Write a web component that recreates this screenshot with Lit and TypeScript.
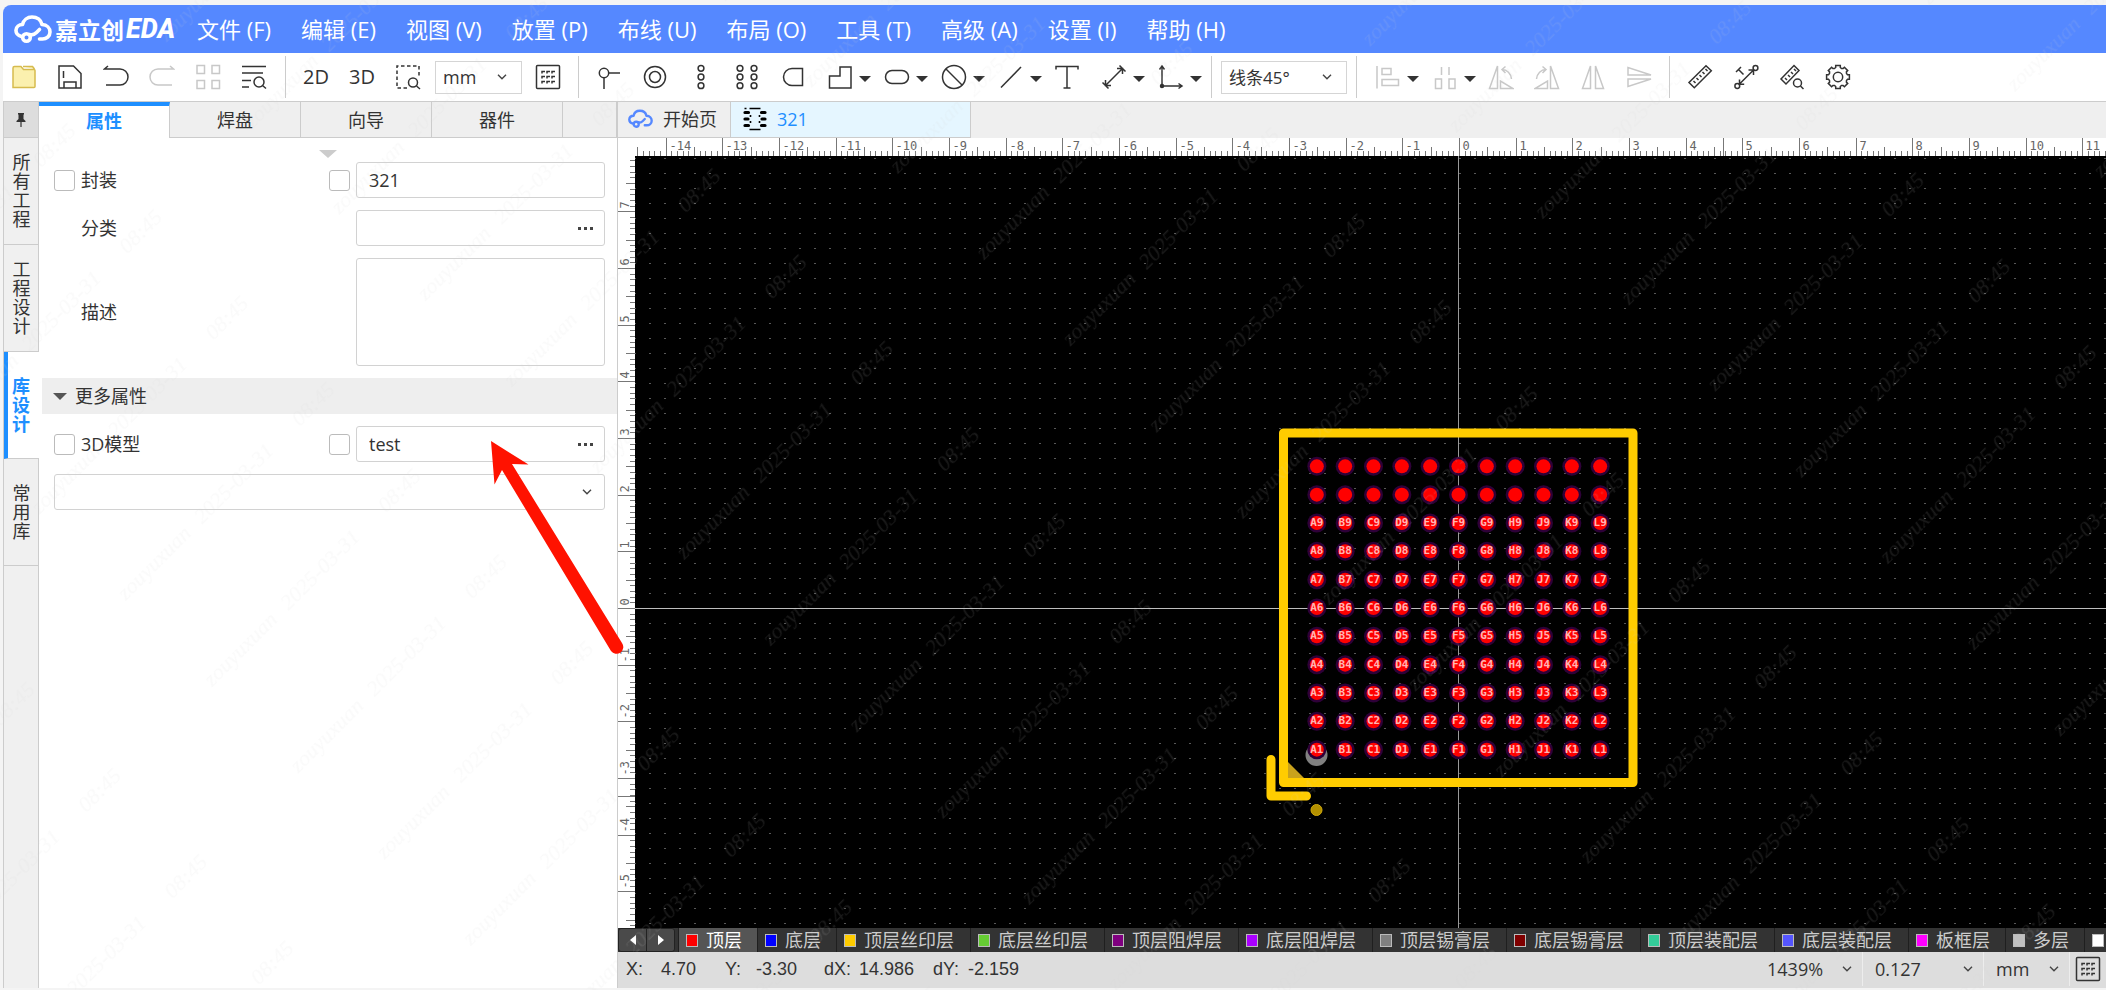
import { LitElement, html, svg, css } from "lit";
import { customElement, property, state } from "lit/decorators.js";
import { classMap } from "lit/directives/class-map.js";
import { styleMap } from "lit/directives/style-map.js";

const UNIT = 170 / 3;
const PITCH = UNIT / 2;
const ORIGIN_X = 824;
const ORIGIN_Y = 452;

const gearPath = (() => {
  const pts: string[] = [];
  for (let k = 0; k < 8; k++) {
    const a = (k * Math.PI) / 4 - Math.PI / 2;
    for (const [off, r] of [[-0.39, 9.2], [-0.24, 9.8], [-0.2, 11.6], [0.2, 11.6], [0.24, 9.8]]) {
      pts.push(`${(13 + r * Math.cos(a + off)).toFixed(1)} ${(13 + r * Math.sin(a + off)).toFixed(1)}`);
    }
  }
  return `M${pts.join("L")}Z`;
})();

const gridDots = [7, 12, 17].flatMap((y) => [7, 12, 17].map((x) => svg`<path d="M${x} ${y + 2.5}v-2h3" />`));

const icons: Record<string, unknown> = {
  folder: svg`<path fill="#fbf0ae" stroke="#d6bb4e" d="M2 23.500V4q0-1.500 1.500-1.500H10l2.500 3H23q1 0 1 1v16q0 1-1 1z M12 2.500h9.500l2 2.500" />`,
  save: svg`<path d="M2 2h14.500L24 9.500V24H2zM6.500 7v7M7 24v-6h12v6" />`,
  undo: svg`<path d="M5 2L1.500 5H17a7.700 7.700 0 0 1 0 16H3" />`,
  redo: svg`<path d="M21 2l3.500 3H9a7.700 7.700 0 0 0 0 16h14" />`,
  tiles: svg`<path d="M2 1.500h7.500v8H2zM17 1.500h7.500v8H17zM2 16.500h7.500v8H2zM17 16.500h7.500v8H17z" />`,
  find: svg`<path d="M1 2.500h24M1 9h21M1 16.500h9M1 23h7M21.500 21.500l3.500 3" /><circle cx="18" cy="18" r="5" />`,
  area: svg`<path stroke-dasharray="3.500 2.500" d="M12 24H2V2h22v10" /><circle cx="18" cy="18.500" r="4.500" /><path d="M21.500 22l3.500 3" />`,
  gridbox: svg`<rect x="1.500" y="1.500" width="23" height="23" rx="1" />${gridDots}`,
  via: svg`<circle cx="8" cy="9" r="4.700" /><path d="M12.700 9H24M8 13.700V25" />`,
  target: svg`<circle cx="13" cy="13" r="10.500" /><circle cx="13" cy="13" r="5.500" />`,
  dots3: svg`<circle cx="13" cy="4.300" r="2.900" /><circle cx="13" cy="13" r="2.900" /><circle cx="13" cy="21.700" r="2.900" />`,
  dots6: [6, 20].map((x) => [4.3, 13, 21.7].map((y) => svg`<circle cx=${x} cy=${y} r="2.900" />`)),
  dpad: svg`<path d="M22.500 4.500v17H12a8.500 8.500 0 0 1 0-17z" />`,
  poly: svg`<path d="M13 3h11v21H2.500V12H13z" />`,
  oval: svg`<rect x="1.500" y="6.500" width="23" height="13" rx="6.500" />`,
  forbid: svg`<circle cx="13" cy="13" r="11.500" /><path d="M5 5l16 16" />`,
  line: svg`<path d="M3 23.500L23 3" />`,
  letter: svg`<path d="M2 5.500v-3h22v3M13 2.500V24M9.500 24h7" />`,
  dim: svg`<path d="M4.500 21.500l17-17M4.500 16v5.500H10M16 4.500h5.500V10M1.500 18.500l6 6M18.500 1.500l6 6" />`,
  axes: svg`<path d="M4 2v20h20M1.500 5.500L4 2l2.500 3.500M20.500 19.500L24 22l-3.500 2.500" /><circle cx="4" cy="22" r="1.500" fill="currentColor" />`,
  align: svg`<path d="M2 2v22.500M7 4.500h9v6H7zM7 15.500h16.500v6H7z" />`,
  distribute: svg`<path d="M9.500 3v8M17 3v8M3.500 15h6v9.500h-6zM17 15h6v9.500h-6z" />`,
  rotleft: svg`<path d="M1.500 24.500L9.500 2v22.500zM12.500 17v7.500H25zM17.500 2.500L14 5.500l3.500 3.500M14 5.500c5 0 9 4 9.500 9.500" />`,
  rotright: svg`<path d="M24.500 24.500L16.500 2v22.500zM13.500 17v7.500H1zM8.500 2.500L12 5.500 8.500 9M12 5.500c-5 0-9 4-9.500 9.500" />`,
  mirror: svg`<path d="M2.500 24.500L10.500 2v22.500zM15.500 2l8 22.500h-8z" />`,
  flip: svg`<path d="M2 3.500V11h23zM2 22.500V15h23z" />`,
  ruler: svg`<path d="M19 1.700l5.300 5L7.300 23.700 2 18.500zM6.500 17l2 2M9.500 14l2 2M12.500 11l2 2M15.500 8l2 2M18.500 5l2 2" />`,
  measure: svg`<circle cx="4.300" cy="22" r="2.400" /><circle cx="22.500" cy="4" r="2.400" /><path d="M6 20.500L20.800 5.800M6.500 15.500v4.700h4.700M15.500 6h5v5M3 8l5-5M5.500 5.500l5 5" />`,
  rulerfind: svg`<path d="M15 1.500l5 5L7 20l-5-5zM6 14l2 2M9 11l2 2M12 8l2 2M15 5l2 2" /><circle cx="18.500" cy="19" r="4" /><path d="M21.500 22l3 3" />`,
  gear: svg`<path d="${gearPath}" /><circle cx="13" cy="13" r="4.700" />`,
};

@customElement("tool-icon")
export class ToolIcon extends LitElement {
  @property() name = "";
  static styles = css`
    :host { display: block; width: 26px; height: 26px; }
    .glyph { display: block; width: 26px; height: 26px; fill: none; stroke: currentColor; stroke-width: 1.5; }
  `;
  render() {
    return html`<svg class="glyph" viewBox="0 0 26 26" aria-hidden="true">${icons[this.name]}</svg>`;
  }
}

@customElement("cloud-mark")
export class CloudMark extends LitElement {
  static styles = css`
    :host { display: block; }
    .mark { display: block; width: 100%; height: 100%; fill: none; stroke: currentColor; stroke-width: 3.6; stroke-linecap: round; stroke-linejoin: round; }
  `;
  render() {
    return html`<svg class="mark" viewBox="0 0 38 29" aria-hidden="true">
      <path d="M7.500 21.500C3.500 20.500 1.800 18 2 15c.2-3.300 3-5.500 6.500-5.500C9.500 5 13.500 2 18 2c5 0 9 3 10 7.500 5 .3 8 3.700 8 7.500 0 4.300-3.500 7-7.500 7h-3" />
      <circle cx="12.500" cy="22.500" r="3.800" />
      <path d="M15.500 19.500c3 1 5 0 7-2l3-3" />
    </svg>`;
  }
}

interface Tool { icon?: string; text?: string; label: string; drop?: boolean; off?: boolean; }

@customElement("tool-group")
export class ToolGroup extends LitElement {
  @property({ attribute: false }) tools: Tool[] = [];
  static styles = css`
    :host { display: flex; align-items: center; }
    .tool {
      display: flex; align-items: center; justify-content: center;
      width: 46px; height: 40px; padding: 0; border: 0; background: none; color: #333;
      font: 400 20px/40px "Open Sans", sans-serif;
    }
    .drop { width: 57px; justify-content: flex-start; padding-left: 11px; gap: 6px; }
    .off { color: #c8c8c8; }
    .caret { width: 12px; height: 6px; fill: #333; margin-top: 4px; }
  `;
  render() {
    return this.tools.map((t) => html`
      <button type="button" aria-label=${t.label} class=${classMap({ tool: true, drop: !!t.drop, off: !!t.off })}>
        ${t.text ? t.text : html`<tool-icon name=${t.icon}></tool-icon>`}
        ${t.drop ? html`<svg class="caret" viewBox="0 0 12 6" aria-hidden="true"><path d="M0 0h12L6 6z" /></svg>` : ""}
      </button>`);
  }
}

@customElement("pick-box")
export class PickBox extends LitElement {
  @property() value = "";
  @property() label = "";
  static styles = css`
    :host { display: block; position: relative; box-sizing: border-box; }
    .pick {
      appearance: none; display: block; width: 100%; height: 100%; margin: 0;
      padding: 0 0 0 var(--pick-pad, 7px); border: 0; background: transparent; color: #333;
      font: var(--pick-size, 18px) "Open Sans", "Noto Sans CJK SC", sans-serif;
    }
    .chev { position: absolute; right: var(--pick-right, 14px); top: 50%; width: 10px; height: 6px; margin-top: -3px; fill: none; stroke: #444; stroke-width: 1.4; pointer-events: none; }
  `;
  render() {
    return html`<select class="pick" aria-label=${this.label}><option>${this.value}</option></select>
      <svg class="chev" viewBox="0 0 10 6" aria-hidden="true"><path d="M1 .700l4 4 4-4" /></svg>`;
  }
}

@customElement("footprint-canvas")
export class FootprintCanvas extends LitElement {
  @state() private spanX = 0;
  @state() private spanY = 0;
  private observer = new ResizeObserver(() => this.measure());

  static styles = css`
    :host { display: grid; grid-template-columns: 17px minmax(0, 1fr); grid-template-rows: 18px minmax(0, 1fr); background: #fff; min-height: 0; overflow: hidden; }
    .layer { display: block; width: 100%; height: 100%; overflow: hidden; min-height: 0; }
    .tick { stroke: #777; stroke-width: 1; }
    .num { font: 12px "DejaVu Sans Mono", monospace; fill: #666; }
    .board { background: #000; }
    .pin { font: bold 11px "DejaVu Sans Mono", monospace; fill: #ffb4b4; text-anchor: middle; }
    .halo { fill: #2e0038; }
    .pad { fill: #ff0000; }
    .silk { fill: none; stroke: #ffcc00; stroke-width: 9; stroke-linecap: round; stroke-linejoin: round; }
  `;

  connectedCallback() {
    super.connectedCallback();
    this.observer.observe(this);
    this.measure();
  }

  disconnectedCallback() {
    super.disconnectedCallback();
    this.observer.disconnect();
  }

  private measure() {
    this.spanX = Math.max(0, this.clientWidth - 17);
    this.spanY = Math.max(0, this.clientHeight - 18);
  }

  private ticks(span: number, vertical: boolean) {
    const out = [];
    const depth = vertical ? 17 : 18;
    const base = vertical ? ORIGIN_Y : ORIGIN_X;
    const from = Math.ceil((-base * 10) / UNIT);
    const to = Math.floor(((span - base) * 10) / UNIT);
    for (let i = from; i <= to; i++) {
      const at = Math.round(base + (i * UNIT) / 10) + 0.5;
      const len = i % 10 === 0 ? depth : i % 5 === 0 ? 9 : 5;
      out.push(vertical
        ? svg`<line class="tick" x1=${depth - len} x2=${depth} y1=${at} y2=${at} />`
        : svg`<line class="tick" y1=${depth - len} y2=${depth} x1=${at} x2=${at} />`);
      if (i % 10 !== 0) continue;
      const n = vertical ? -i / 10 : i / 10;
      const room = 3 + String(n).length * 7.3;
      if (vertical && at > room) {
        out.push(svg`<text class="num" transform="translate(11 ${at - 3}) rotate(-90)">${String(n || 0)}</text>`);
      } else if (!vertical && at + room < span) {
        out.push(svg`<text class="num" x=${at + 3} y="12">${String(n)}</text>`);
      }
    }
    return out;
  }

  render() {
    const cols = ["A", "B", "C", "D", "E", "F", "G", "H", "J", "K", "L"];
    const pads = cols.flatMap((c, ci) =>
      cols.map((_, ri) => {
        const x = (ci - 5) * PITCH;
        const y = (5 - ri) * PITCH;
        return svg`<circle class="halo" cx=${x} cy=${y} r="9.500" /><circle class="pad" cx=${x} cy=${y} r="7" />
          ${ri < 9 ? svg`<text class="pin" x=${x} y=${y + 3}>${c}${ri + 1}</text>` : ""}`;
      }));
    return html`
      <span></span>
      <svg class="layer" aria-hidden="true">
        ${this.ticks(this.spanX, false)}
        <line class="tick" x1="1088.500" x2="1088.500" y1="0" y2="18" />
      </svg>
      <svg class="layer" aria-hidden="true">
        ${this.ticks(this.spanY, true)}
        <line class="tick" y1="640.500" y2="640.500" x1="0" x2="17" />
      </svg>
      <svg class="layer board" role="img" aria-label="321">
        <defs>
          <pattern id="dots" width="15" height="15" patternUnits="userSpaceOnUse" x="-1" y="2">
            <rect x="0" y="0" width="2" height="1" fill="#585858" />
          </pattern>
        </defs>
        <rect width="100%" height="100%" fill="url(#dots)" />
        <line x1="0" x2="100%" y1="452.500" y2="452.500" stroke="#bdbdbd" />
        <line x1="823.500" x2="823.500" y1="0" y2="100%" stroke="#9a9a9a" />
        <g transform="translate(${ORIGIN_X - 0.5} ${ORIGIN_Y})">
          <circle cx="-142" cy="147" r="11" fill="#808080" />
          ${pads}
          <path d="M-170.500 154L-154 170.500H-170.500z" fill="#c9a21c" />
          <path class="silk" d="M-175-175H174.500V174.500H-175z" />
          <path class="silk" d="M-187.500 151.500V188H-152" />
          <circle cx="-142" cy="202" r="5.500" fill="#b39000" stroke="#d1aa0c" />
        </g>
      </svg>`;
  }
}

const menus = ["文件 (F)", "编辑 (E)", "视图 (V)", "放置 (P)", "布线 (U)", "布局 (O)", "工具 (T)", "高级 (A)", "设置 (I)", "帮助 (H)"];

const fileTools: Tool[] = [
  { icon: "folder", label: "打开" }, { icon: "save", label: "保存" }, { icon: "undo", label: "撤销" },
  { icon: "redo", label: "重做", off: true }, { icon: "tiles", label: "交叉选择", off: true }, { icon: "find", label: "查找" },
];
const viewTools: Tool[] = [{ text: "2D", label: "2D" }, { text: "3D", label: "3D" }, { icon: "area", label: "区域选择" }];
const drawTools: Tool[] = [
  { icon: "via", label: "焊盘" }, { icon: "target", label: "过孔" }, { icon: "dots3", label: "单排焊盘" },
  { icon: "dots6", label: "双排焊盘" }, { icon: "dpad", label: "异形焊盘" }, { icon: "poly", label: "填充区域", drop: true },
  { icon: "oval", label: "挖槽", drop: true }, { icon: "forbid", label: "禁止区域", drop: true },
  { icon: "line", label: "线条", drop: true }, { icon: "letter", label: "文本" },
  { icon: "dim", label: "尺寸", drop: true }, { icon: "axes", label: "原点", drop: true },
];
const arrangeTools: Tool[] = [
  { icon: "align", label: "对齐", drop: true, off: true }, { icon: "distribute", label: "分布", drop: true, off: true },
  { icon: "rotleft", label: "左旋转", off: true }, { icon: "rotright", label: "右旋转", off: true },
  { icon: "mirror", label: "水平翻转", off: true }, { icon: "flip", label: "垂直翻转", off: true },
];
const checkTools: Tool[] = [
  { icon: "ruler", label: "测量" }, { icon: "measure", label: "测量距离" },
  { icon: "rulerfind", label: "检查尺寸" }, { icon: "gear", label: "设置" },
];
const layers = [
  ["顶层", "#ff0000"], ["底层", "#0000ff"], ["顶层丝印层", "#ffcc00"], ["底层丝印层", "#66cc33"],
  ["顶层阻焊层", "#800080"], ["底层阻焊层", "#aa00ff"], ["顶层锡膏层", "#808080"], ["底层锡膏层", "#800000"],
  ["顶层装配层", "#33cc99"], ["底层装配层", "#5555ff"], ["板框层", "#ff00ff"], ["多层", "#c0c0c0"], ["", "#ffffff"],
];

@customElement("app-root")
export class AppRoot extends LitElement {
  static styles = css`
    :host {
      display: flex; flex-direction: column; position: relative; box-sizing: border-box;
      height: 100vh; padding: 5px 0 2px 3px; overflow: hidden; background: #f4f4f4; color: #333;
      font: 18px/24px "Open Sans", "Noto Sans CJK SC", sans-serif;
    }
    button { font: inherit; color: inherit; padding: 0; border: 0; background: none; }
    .head { display: flex; align-items: center; height: 48px; flex: none; background: #5588ff; color: #fff; border-radius: 8px 0 0 0; padding-left: 11px; }
    .logo { width: 38px; height: 29px; }
    .brand { display: flex; align-items: center; margin-left: 3px; width: 142px; font: 700 23px/48px "Noto Sans CJK SC", sans-serif; white-space: nowrap; }
    .eda { font: italic 800 27px/48px Roboto, sans-serif; margin-left: 2px; }
    .menu { display: flex; gap: 30px; font-size: 22px; line-height: 44px; white-space: nowrap; }
    .tools { display: flex; align-items: center; height: 48px; flex: none; background: #fff; border-bottom: 1px solid #ccc; box-sizing: content-box; }
    .sep { width: 1px; height: 42px; background: #ccc; margin: 0 7px; flex: none; }
    .first { margin-left: -2px; margin-right: 1px; }
    .box { height: 33px; border: 1px solid #d5d5d5; }
    .unit { width: 87px; margin: 0 3px 0 4px; }
    .angle { width: 126px; margin: 0 2px; --pick-size: 17px; }
    .main { display: flex; flex: 1; min-height: 0; background: #fff; }
    .rail { display: flex; flex-direction: column; width: 36px; flex: none; box-sizing: border-box; background: #f0f0f0; border-left: 1px solid #ccc; }
    .pin { display: flex; align-items: center; justify-content: center; height: 36px; background: #ddd; border-right: 1px solid #ccc; border-bottom: 1px solid #ccc; box-sizing: border-box; }
    .pinmark { width: 10px; height: 14px; fill: #333; }
    .side { height: 107px; box-sizing: border-box; line-height: 19px; border-right: 1px solid #ccc; border-bottom: 1px solid #ccc; padding: 0 7px 0 8px; word-break: break-all; }
    .side.on { background: #fff; border-right: 0; border-left: 4px solid #1e8fff; padding: 0 9px 0 4px; color: #1e8fff; font-weight: 700; }
    .rest { flex: 1; border-right: 1px solid #ccc; }
    .panel { display: flex; flex-direction: column; width: 578px; flex: none; border-right: 1px solid #ccc; }
    .tabs { display: grid; grid-template-columns: repeat(4, 131px) 1fr; height: 36px; flex: none; background: #efefef; }
    .tab { border-right: 1px solid #ccc; border-bottom: 1px solid #ccc; box-sizing: border-box; }
    .tab.on { background: #fff; border-top: 4px solid #1e8fff; border-bottom: 0; padding-bottom: 3px; color: #1e8fff; font-weight: 700; }
    .fold { align-self: center; width: 18px; height: 8px; margin: 12px 0 4px; fill: #ccc; }
    .form { display: grid; grid-template-columns: 21px minmax(0, 1fr) 21px 249px; column-gap: 6px; row-gap: 12px; align-items: center; padding: 0 12px 0 15px; }
    .check { appearance: none; width: 21px; height: 21px; margin: 0; box-sizing: border-box; border: 1px solid #bbb; border-radius: 3px; background: #fff; }
    .name { grid-column: 2; }
    .field { grid-column: 4; display: flex; align-items: center; box-sizing: border-box; height: 36px; border: 1px solid #d2d2d2; border-radius: 3px; }
    .text { flex: 1; min-width: 0; height: 100%; box-sizing: border-box; border: 0; background: none; padding: 0 12px; color: #333; font: 18px "Open Sans", "Noto Sans CJK SC", sans-serif; }
    .more { display: flex; gap: 3px; margin-right: 11px; }
    .dot { width: 3px; height: 3px; background: #444; }
    .area { grid-column: 4; height: 108px; box-sizing: border-box; margin: 0; padding: 6px 12px; border: 1px solid #d2d2d2; border-radius: 3px; resize: none; background: none; font: inherit; }
    .band { display: flex; align-items: center; gap: 8px; height: 36px; margin: 12px 0 12px 3px; padding: 0 0 0 11px; background: #eee; text-align: left; }
    .tri { width: 14px; height: 7px; fill: #555; }
    .wide { height: 36px; margin: 12px 12px 0 15px; border: 1px solid #d2d2d2; border-radius: 3px; --pick-right: 12px; }
    .work { display: flex; flex-direction: column; flex: 1; min-width: 0; }
    .docs { display: flex; height: 36px; flex: none; background: #efefef; }
    .doc { display: flex; align-items: center; gap: 10px; width: 113px; box-sizing: border-box; padding: 0 0 2px 10px; border-right: 1px solid #ccc; border-bottom: 1px solid #ccc; white-space: nowrap; }
    .cloud { width: 25px; height: 20px; color: #5588ff; flex: none; }
    .doc.on { width: 240px; padding-left: 12px; background: #e5f6ff; color: #1e8fff; }
    .chip { width: 24px; height: 24px; flex: none; }
    .canvas { flex: 1; }
    .layers { display: flex; height: 24px; flex: none; background: #333; overflow: hidden; }
    .scroll { display: flex; width: 57px; height: 24px; flex: none; box-sizing: border-box; margin-right: 3px; border: 1px solid #222; border-radius: 3px; background: #4a4a4a; }
    .step { display: flex; flex: 1; align-items: center; justify-content: center; }
    .step + .step { border-left: 1px solid #222; }
    .arrow { width: 6px; height: 10px; fill: #fff; }
    .layer { display: flex; align-items: center; flex: none; gap: 8px; padding: 0 15px 0 7px; line-height: 24px; color: #ccc; border-left: 1px solid #1f1f1f; white-space: nowrap; }
    .layer.long { padding-right: 16px; }
    .layer.on { background: #555; color: #fff; }
    .swatch { width: 12px; height: 13px; box-sizing: border-box; border: 1px solid #bbb; }
    .status { display: flex; align-items: center; height: 36px; flex: none; background: #ddd; font-family: "Liberation Sans", sans-serif; padding: 0 5px 2px 8px; box-sizing: border-box; }
    .pair { display: flex; width: 99px; white-space: nowrap; }
    .pair.long { width: 109px; }
    .key { width: 35px; }
    .key.thin { width: 31px; }
    .space { flex: 1; }
    .cell { height: 34px; border-right: 1px solid #ededed; --pick-right: 10px; --pick-pad: 12px; }
    .zoom { width: 108px; }
    .snap { width: 121px; }
    .mm { width: 86px; }
    .grid { margin-left: 5px; }
    .overlay { position: absolute; inset: 0; width: 100%; height: 100%; pointer-events: none; }
    .water { font: italic 22px "Liberation Serif", serif; fill: #cfcfcf; }
  `;

  private more(label: string) {
    return html`<button class="more" type="button" aria-label=${label}><span class="dot"></span><span class="dot"></span><span class="dot"></span></button>`;
  }

  render() {
    return html`
      <header class="head">
        <cloud-mark class="logo"></cloud-mark>
        <span class="brand">嘉立创<span class="eda">EDA</span></span>
        <nav class="menu">${menus.map((m) => html`<button type="button">${m}</button>`)}</nav>
      </header>
      <div class="tools">
        <tool-group class="first" .tools=${fileTools}></tool-group>
        <span class="sep"></span>
        <tool-group .tools=${viewTools}></tool-group>
        <pick-box class="box unit" value="mm" label="单位"></pick-box>
        <tool-group .tools=${[{ icon: "gridbox", label: "网格" }]}></tool-group>
        <span class="sep"></span>
        <tool-group .tools=${drawTools}></tool-group>
        <span class="sep"></span>
        <pick-box class="box angle" value="线条45°" label="布线拐角"></pick-box>
        <span class="sep"></span>
        <tool-group .tools=${arrangeTools}></tool-group>
        <span class="sep"></span>
        <tool-group .tools=${checkTools}></tool-group>
      </div>
      <main class="main">
        <nav class="rail">
          <button class="pin" type="button" aria-label="固定">
            <svg class="pinmark" viewBox="0 0 10 14" aria-hidden="true"><path d="M2 0h6v1.500H7.500V6L9.500 8v1H5.600v5H4.400V9H.5V8l2-2V1.500H2z" /></svg>
          </button>
          <button class="side" type="button">所有工程</button>
          <button class="side" type="button">工程设计</button>
          <button class="side on" type="button">库设计</button>
          <button class="side" type="button">常用库</button>
          <span class="rest"></span>
        </nav>
        <section class="panel">
          <div class="tabs">
            <button class="tab on" type="button">属性</button>
            <button class="tab" type="button">焊盘</button>
            <button class="tab" type="button">向导</button>
            <button class="tab" type="button">器件</button>
            <span class="tab"></span>
          </div>
          <svg class="fold" viewBox="0 0 18 8" aria-hidden="true"><path d="M0 0h18L9 8z" /></svg>
          <div class="form">
            <input class="check" type="checkbox" aria-label="选择封装" />
            <label class="name" for="footprint">封装</label>
            <input class="check" type="checkbox" aria-label="显示封装" />
            <span class="field"><input class="text" id="footprint" value="321" /></span>
            <label class="name" for="category">分类</label>
            <span class="field"><input class="text" id="category" />${this.more("选择分类")}</span>
            <label class="name" for="description">描述</label>
            <textarea class="area" id="description"></textarea>
          </div>
          <button class="band" type="button">
            <svg class="tri" viewBox="0 0 14 7" aria-hidden="true"><path d="M0 0h14L7 7z" /></svg>更多属性
          </button>
          <div class="form">
            <input class="check" type="checkbox" aria-label="选择3D模型" />
            <label class="name" for="model">3D模型</label>
            <input class="check" type="checkbox" aria-label="显示3D模型" />
            <span class="field"><input class="text" id="model" value="test" />${this.more("选择3D模型")}</span>
          </div>
          <pick-box class="wide" label="添加属性"></pick-box>
        </section>
        <section class="work">
          <div class="docs">
            <button class="doc" type="button"><cloud-mark class="cloud"></cloud-mark>开始页</button>
            <button class="doc on" type="button">
              <svg class="chip" viewBox="0 0 24 24" aria-hidden="true">
                <path d="M2 5.500h3.500M2 12h3M2 18.500h3.500M18.500 5.500H22M19 12h3M18.500 18.500H22" stroke="#000" stroke-width="3.200" stroke-linecap="round" />
                <path d="M6.500 1.500h11M6.500 22.500h11M7.500 8v2M7.500 14v2M16.500 8v2M16.500 14v2M1.500 1.500h2" stroke="#000" stroke-width="1.600" />
              </svg>321
            </button>
          </div>
          <footprint-canvas class="canvas"></footprint-canvas>
          <div class="layers">
            <span class="scroll">
              <button class="step" type="button" aria-label="向左"><svg class="arrow" viewBox="0 0 6 10" aria-hidden="true"><path d="M6 0v10L0 5z" /></svg></button>
              <button class="step" type="button" aria-label="向右"><svg class="arrow" viewBox="0 0 6 10" aria-hidden="true"><path d="M0 0v10l6-5z" /></svg></button>
            </span>
            ${layers.map(([name, color], i) => html`
              <button type="button" aria-label=${name || "更多图层"} class=${classMap({ layer: true, on: i === 0, long: name.length > 3 })}>
                <span class="swatch" style=${styleMap({ background: color })}></span>${name}
              </button>`)}
          </div>
          <footer class="status">
            <span class="pair"><span class="key">X:</span><span>4.70</span></span>
            <span class="pair"><span class="key thin">Y:</span><span>-3.30</span></span>
            <span class="pair long"><span class="key">dX:</span><span>14.986</span></span>
            <span class="pair long"><span class="key">dY:</span><span>-2.159</span></span>
            <span class="space"></span>
            <pick-box class="cell zoom" value="1439%" label="缩放"></pick-box>
            <pick-box class="cell snap" value="0.127" label="栅格尺寸"></pick-box>
            <pick-box class="cell mm" value="mm" label="单位"></pick-box>
            <tool-icon class="grid" name="gridbox"></tool-icon>
          </footer>
        </section>
      </main>
      <svg class="overlay" aria-hidden="true">
        <defs>
          <pattern id="water" width="424" height="122" patternUnits="userSpaceOnUse" patternTransform="rotate(-45)">
            <g class="water" opacity=".12">
              <text x="88" y="26">zouyuxuan</text>
              <text x="196" y="26">2025-03-31</text>
              <text x="334" y="26">08:45</text>
            </g>
          </pattern>
        </defs>
        <rect width="100%" height="100%" fill="url(#water)" />
        <path fill="#ff1200" d="M491 441l37.500 23.500-16.500-.5 110 179a6 6 0 0 1-11 8L502 470l-7.500 14.500z" />
      </svg>`;
  }
}
